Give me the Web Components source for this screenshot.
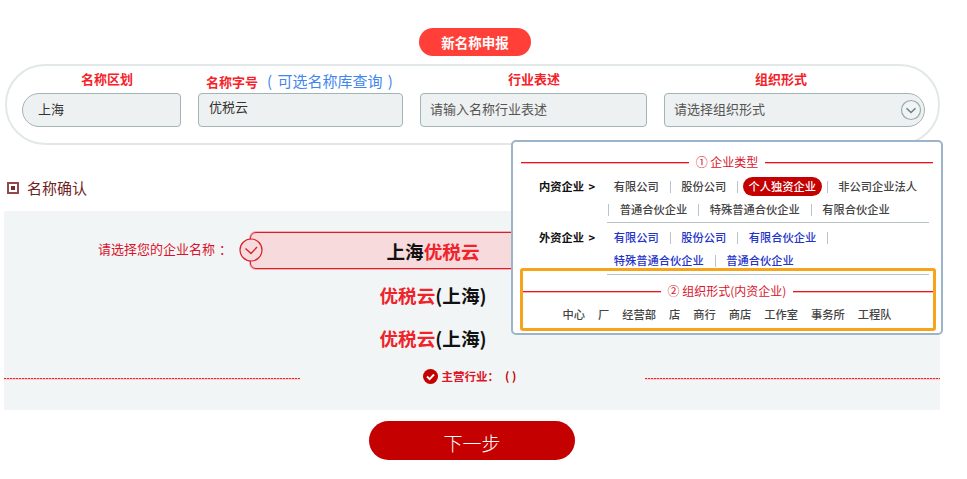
<!DOCTYPE html>
<html lang="zh-CN">
<head>
<meta charset="utf-8">
<title>新名称申报</title>
<style>
html,body{margin:0;padding:0;background:#fff}
body{font-family:"Noto Sans CJK SC","Liberation Sans",sans-serif;color:#333}
</style>
</head>
<body>
<x-page>
  <x-pill-button slot="top" kind="small">新名称申报</x-pill-button>
  <x-name-panel slot="panel">
    <x-name-field label="名称区划" indent="59" shape="left" pad="15">上海</x-name-field>
    <x-name-field indent="8" pad="10" raised low>
      <span slot="label">名称字号<span style="color:#3f86ee;font-weight:400;font-size:15px;margin-left:9px;word-spacing:2px">( 可选名称库查询 )</span></span>
      优税云
    </x-name-field>
    <x-name-field label="行业表述" indent="88" pad="9" muted>请输入名称行业表述</x-name-field>
    <x-name-field label="组织形式" indent="91" pad="9" shape="right" muted chevron>请选择组织形式</x-name-field>
  </x-name-panel>
  <x-section-title slot="heading">名称确认</x-section-title>
  <x-name-section slot="section">
    <x-name-option selected label="请选择您的企业名称"><span style="color:#111">上海</span><span style="color:#f0222a">优税云</span></x-name-option>
    <x-name-option><span style="color:#f0222a">优税云</span><span style="color:#111">(上海)</span></x-name-option>
    <x-name-option><span style="color:#f0222a">优税云</span><span style="color:#111">(上海)</span></x-name-option>
    <x-industry-note slot="note">主营行业：<span style="color:#c40000;margin-left:6px">( )</span></x-industry-note>
  </x-name-section>
  <x-pill-button slot="next" kind="large">下一步</x-pill-button>
  <x-type-menu slot="menu"></x-type-menu>
</x-page>
<template id="t-menu">
<style>
:host{display:block;box-sizing:border-box;width:432px;border:2px solid #9cb4c9;border-radius:5px;background:#fff;padding:10px 0 8px;position:relative;font-size:11.25px;line-height:23px;color:#444;font-weight:500}
.title{display:flex;align-items:center;height:20px;margin:0 8px 0 8px;color:#d9152c;font-size:12px;line-height:20px;gap:7px;font-weight:400}
.title i{flex:1;height:1px;background:#ec141c;box-shadow:0 1px 0 #f8b4b4}
.group{display:flex;margin-top:3px}
.group.first{margin-top:3px}
.head{width:90px;box-sizing:border-box;padding-left:26px;color:#111;font-weight:700;white-space:nowrap;word-spacing:2px}
.items{flex:1;min-width:0}
.row{display:flex;height:23px;align-items:center;white-space:nowrap}
.row.sub{margin-left:5px}
.row span{padding:0 10.75px}
.row span.bar{padding:0;width:1px;height:12px;background:#b8c6cc}
.row span.on{padding:0 6px;margin:0 4.5px;background:#c40000;color:#fff;border-radius:10px;height:19px;line-height:19px}
.blue span:not(.bar){color:#2433c9}
hr{border:0;height:1px;background:#b9c4c6;margin:1px 12px 0 94px}
hr.b{margin-top:2px}
.org{display:flex;justify-content:center;gap:13px;height:22px;line-height:22px;margin-top:2px}
.t2{margin-top:6px}
.box{position:absolute;left:7px;top:126px;width:416px;height:63px;box-sizing:border-box;border:3px solid #f6a41c;border-radius:3px;pointer-events:none}
</style>
<div class="title"><i></i><span>① 企业类型</span><i></i></div>
<div class="group first"><div class="head">内资企业 &gt;</div><div class="items">
  <div class="row"><span>有限公司</span><span class="bar"></span><span>股份公司</span><span class="bar"></span><span class="on">个人独资企业</span><span class="bar"></span><span>非公司企业法人</span></div>
  <div class="row sub"><span class="bar"></span><span>普通合伙企业</span><span class="bar"></span><span>特殊普通合伙企业</span><span class="bar"></span><span>有限合伙企业</span></div>
</div></div>
<hr>
<div class="group blue"><div class="head">外资企业 &gt;</div><div class="items">
  <div class="row"><span>有限公司</span><span class="bar"></span><span>股份公司</span><span class="bar"></span><span>有限合伙企业</span><span class="bar"></span></div>
  <div class="row"><span>特殊普通合伙企业</span><span class="bar"></span><span>普通合伙企业</span></div>
</div></div>
<hr class="b">
<div class="title t2"><i></i><span>② 组织形式(内资企业)</span><i></i></div>
<div class="org"><span>中心</span><span>厂</span><span>经营部</span><span>店</span><span>商行</span><span>商店</span><span>工作室</span><span>事务所</span><span>工程队</span></div>
<div class="box"></div>
</template>
<script>
function def(name, css, html, extra){
  customElements.define(name, class extends HTMLElement{
    constructor(){super();const r=this.attachShadow({mode:'open'});r.innerHTML='<style>'+css+'</style>'+html;}
    connectedCallback(){ if(extra) extra(this,this.shadowRoot); }
  });
}
def('x-page',
 ':host{display:block;position:relative;width:967px;height:479px;overflow:hidden}'+
 '.top{display:flex;justify-content:center;padding:28px 0 8px 0;margin-left:-17px}'+
 '.panel{margin-left:5px}'+
 '.heading{margin:33px 0 13px 7px}'+
 '.section{margin-left:4px}'+
 '.next{display:flex;justify-content:center;margin:11px 0 0 -23px}'+
 '.menu{position:absolute;left:511px;top:140px}',
 '<div class="top"><slot name="top"></slot></div><div class="panel"><slot name="panel"></slot></div>'+
 '<div class="heading"><slot name="heading"></slot></div><div class="section"><slot name="section"></slot></div>'+
 '<div class="next"><slot name="next"></slot></div><div class="menu"><slot name="menu"></slot></div>');
def('x-pill-button',
 ':host{display:block;color:#fff;text-align:center}'+
 ':host([kind=small]){width:112px;height:28px;line-height:28px;border-radius:14px;background:#ff3f38;font-size:13.5px;font-weight:700}'+
 ':host([kind=large]){width:206px;height:39px;line-height:43px;border-radius:20px;background:#c40000;font-size:19px;font-weight:300}',
 '<slot></slot>');
def('x-name-panel',
 ':host{display:flex;box-sizing:border-box;width:935px;height:81px;border:2px solid #e2e7e7;border-radius:40px;padding:4px 0 0 15px;gap:17px}',
 '<slot></slot>');
def('x-name-field',
 ':host{display:block;font-size:13px}'+
 '.label{height:23px;line-height:18px;color:#f5222a;font-weight:700;white-space:nowrap;font-size:13px}'+
 ':host([low]) .label{line-height:22px}'+
 '.box{box-sizing:border-box;height:34px;padding-bottom:2px;border:1px solid #a3b4b4;border-radius:4px;background:#eef1f1;display:flex;align-items:center;color:#333;line-height:18px;position:relative}'+
 ':host([muted]) .box{color:#555}'+
 ':host([raised]) .box .t{position:relative;top:-2px}'+
 ':host([shape=left]) .box{border-radius:17px 4px 4px 17px}'+
 ':host([shape=right]) .box{border-radius:4px 17px 17px 4px}'+
 'svg{position:absolute;right:2px;top:5px}',
 '<div class="label"><slot name="label"></slot></div><div class="box"><span class="t"><slot></slot></span></div>',
 (h,r)=>{
   const w={'名称区划':159,'行业表述':227,'组织形式':261}[h.getAttribute('label')]||205;
   h.style.width=w+'px';
   const l=r.querySelector('.label'); l.style.paddingLeft=h.getAttribute('indent')+'px';
   if(h.getAttribute('label')){const s=document.createElement('span');s.textContent=h.getAttribute('label');l.replaceChildren(s);}
   const b=r.querySelector('.box'); b.style.paddingLeft=h.getAttribute('pad')+'px';
   if(h.hasAttribute('chevron')) b.insertAdjacentHTML('beforeend','<svg width="22" height="22" viewBox="0 0 22 22"><circle cx="11" cy="11" r="9.5" fill="#f1f4f4" stroke="#9aabac" stroke-width="1.2"/><path d="M6.500 9.200l4.500 4.300 4.500-4.300" fill="none" stroke="#6b7d7f" stroke-width="1.400"/></svg>');
 });
def('x-section-title',
 ':host{display:flex;align-items:center;gap:8px;height:20px;line-height:20px;font-size:15px;color:#6e2222}'+
 'i{box-sizing:border-box;width:12px;height:12px;border:2px solid #92494a;display:flex;align-items:center;justify-content:center}'+
 'b{width:4px;height:4px;background:#7a2a2a}',
 '<i><b></b></i><span><slot></slot></span>');
def('x-name-section',
 ':host{display:block;box-sizing:border-box;width:936px;height:199px;background:#f1f5f6;padding-top:21px}',
 '<slot></slot><slot name="note"></slot>');
def('x-name-option',
 ':host{display:flex;align-items:center;height:43px;font-size:18.6px;font-weight:700}'+
 ':host([selected]){height:37px;margin-bottom:4px}'+
 '.label{width:228px;flex:none;text-align:right;font-size:13px;font-weight:400;color:#d8142c;white-space:nowrap;line-height:16px;position:relative;top:-2px}'+
 '.label em{font-style:normal;margin-left:4px}'+
 '.gap{width:18px;flex:none}'+
 '.pill{position:relative;box-sizing:border-box;width:366px;height:37px;line-height:35px;text-align:center;border:1px solid transparent;border-radius:6px}'+
 ':host([selected]) .pill{background:#f6dadc;border-color:#e01a26;box-shadow:0 0 0 1px rgba(224,26,38,.3)}'+
 'svg{position:absolute;left:-12px;top:5px}',
 '<div class="label"></div><div class="gap"></div><div class="pill"><slot></slot></div>',
 (h,r)=>{
   const a=h.getAttribute('label');
   if(a){const l=r.querySelector('.label');l.textContent=a;const e=document.createElement('em');e.textContent='：';l.appendChild(e);}
   if(h.hasAttribute('selected')) r.querySelector('.pill').insertAdjacentHTML('beforeend','<svg width="24" height="24" viewBox="0 0 24 24"><circle cx="12" cy="12" r="11" fill="#f6dadc" stroke="#d81e2a" stroke-width="1.2"/><path d="M6.500 10.500l5.500 5 6-6.500" fill="none" stroke="#d81e2a" stroke-width="1.300"/></svg>');
 });
def('x-industry-note',
 ':host{display:flex;align-items:center;width:936px;margin-top:9px}'+
 'i{flex:1;height:1px;background:repeating-linear-gradient(90deg,#f0202c 0 2px,#fbb6b9 2px 3px);box-shadow:0 1px 0 #fbd0d2;position:relative;top:2px}'+
 '.m{width:345px;display:flex;justify-content:center;align-items:center;gap:4px;padding-right:5px;box-sizing:border-box;color:#e01426;font-size:11.5px;font-weight:700;line-height:16px;white-space:nowrap}',
 '<i></i><div class="m"><svg width="15" height="15" viewBox="0 0 15 15"><circle cx="7.500" cy="7.500" r="7.500" fill="#c40000"/><path d="M4 7.500l2.600 2.600L11 5.500" fill="none" stroke="#fff" stroke-width="1.900"/></svg><span><slot></slot></span></div><i></i>');
customElements.define('x-type-menu', class extends HTMLElement{
  constructor(){super();this.attachShadow({mode:'open'}).appendChild(document.getElementById('t-menu').content.cloneNode(true));}
});
</script>
</body>
</html>
